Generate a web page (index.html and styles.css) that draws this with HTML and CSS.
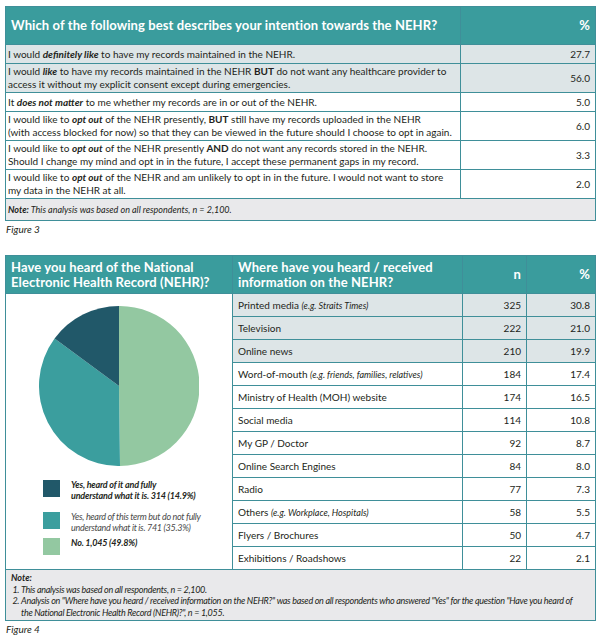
FILE: index.html
```html
<!DOCTYPE html>
<html>
<head>
<meta charset="utf-8">
<link rel="stylesheet" href="styles.css">
</head>
<body>
<div class="page">
  <table class="tbl fig3">
    <colgroup><col class="c-q"><col class="c-p"></colgroup>
    <thead>
      <tr><th class="hd">Which of the following best describes your intention towards the NEHR?</th><th class="hd num">%</th></tr>
    </thead>
    <tbody>
      <tr class="shade"><td>I would <b><i>definitely like</i></b> to have my records maintained in the NEHR.</td><td class="num">27.7</td></tr>
      <tr class="shade"><td>I would <b><i>like</i></b> to have my records maintained in the NEHR <b>BUT</b> do not want any healthcare provider to<br>access it without my explicit consent except during emergencies.</td><td class="num">56.0</td></tr>
      <tr><td>It <b><i>does not matter</i></b> to me whether my records are in or out of the NEHR.</td><td class="num">5.0</td></tr>
      <tr><td>I would like to <b><i>opt out</i></b> of the NEHR presently, <b>BUT</b> still have my records uploaded in the NEHR<br>(with access blocked for now) so that they can be viewed in the future should I choose to opt in again.</td><td class="num">6.0</td></tr>
      <tr><td>I would like to <b><i>opt out</i></b> of the NEHR presently <b>AND</b> do not want any records stored in the NEHR.<br>Should I change my mind and opt in in the future, I accept these permanent gaps in my record.</td><td class="num">3.3</td></tr>
      <tr><td>I would like to <b><i>opt out</i></b> of the NEHR and am unlikely to opt in in the future. I would not want to store<br>my data in the NEHR at all.</td><td class="num">2.0</td></tr>
      <tr class="note-row"><td colspan="2"><b>Note:</b> This analysis was based on all respondents, n = 2,100.</td></tr>
    </tbody>
  </table>
  <p class="caption">Figure 3</p>

  <table class="tbl fig4">
    <colgroup><col class="c-left"><col class="c-src"><col class="c-n"><col class="c-pc"></colgroup>
    <thead>
      <tr>
        <th class="hd hd2">Have you heard of the National<br>Electronic Health Record (NEHR)?</th>
        <th class="hd hd2 src-h">Where have you heard / received<br>information on the NEHR?</th>
        <th class="hd num">n</th>
        <th class="hd num">%</th>
      </tr>
    </thead>
    <tbody>
      <tr class="shade">
        <td class="left" rowspan="12">
          <div class="chart">
            <svg class="pie" width="160" height="160" viewBox="0 0 160 160">
              <path d="M80,80 L80,0 A80,80 0 0 1 81.0,160 Z" fill="#93c8a1"/>
              <path d="M80,80 L81.0,160 A80,80 0 0 1 15.58,32.57 Z" fill="#3b9e9e"/>
              <path d="M80,80 L15.58,32.57 A80,80 0 0 1 80,0 Z" fill="#215869"/>
            </svg>
            <ul class="legend">
              <li class="lg lg1"><span class="sw sw-dark"></span><span class="lt strong">Yes, heard of it and fully<br>understand what it is. 314 (14.9%)</span></li>
              <li class="lg lg2"><span class="sw sw-teal"></span><span class="lt light">Yes, heard of this term but do not fully<br>understand what it is. 741 (35.3%)</span></li>
              <li class="lg lg3"><span class="sw sw-green"></span><span class="lt strong">No. 1,045 (49.8%)</span></li>
            </ul>
          </div>
        </td>
        <td>Printed media <i class="eg">(e.g. Straits Times)</i></td><td class="num">325</td><td class="num">30.8</td>
      </tr>
      <tr class="shade"><td>Television</td><td class="num">222</td><td class="num">21.0</td></tr>
      <tr class="shade"><td>Online news</td><td class="num">210</td><td class="num">19.9</td></tr>
      <tr><td>Word-of-mouth <i class="eg">(e.g. friends, families, relatives)</i></td><td class="num">184</td><td class="num">17.4</td></tr>
      <tr><td>Ministry of Health (MOH) website</td><td class="num">174</td><td class="num">16.5</td></tr>
      <tr><td>Social media</td><td class="num">114</td><td class="num">10.8</td></tr>
      <tr><td>My GP / Doctor</td><td class="num">92</td><td class="num">8.7</td></tr>
      <tr><td>Online Search Engines</td><td class="num">84</td><td class="num">8.0</td></tr>
      <tr><td>Radio</td><td class="num">77</td><td class="num">7.3</td></tr>
      <tr><td>Others <i class="eg">(e.g. Workplace, Hospitals)</i></td><td class="num">58</td><td class="num">5.5</td></tr>
      <tr><td>Flyers / Brochures</td><td class="num">50</td><td class="num">4.7</td></tr>
      <tr><td>Exhibitions / Roadshows</td><td class="num">22</td><td class="num">2.1</td></tr>
      <tr class="note-row note4">
        <td colspan="4">
          <div class="note-title">Note:</div>
          <ol class="notes">
            <li>This analysis was based on all respondents, n = 2,100.</li>
            <li>Analysis on "Where have you heard / received information on the NEHR?" was based on all respondents who answered "Yes" for the question "Have you heard of<br>the National Electronic Health Record (NEHR)?", n = 1,055.</li>
          </ol>
        </td>
      </tr>
    </tbody>
  </table>
  <p class="caption">Figure 4</p>
</div>
</body>
</html>
```

FILE: styles.css
```css
html, body {
  margin: 0;
  padding: 0;
  background: #ffffff;
}
body {
  font-family: Lato, "Noto Sans", sans-serif;
  color: #231f20;
}
.page {
  padding: 6px 5px 0 5px;
  width: 590px;
}
.tbl {
  width: 590px;
  border-collapse: collapse;
  table-layout: fixed;
  border: 1.5px solid #2e7e88;
}
.tbl td, .tbl th {
  border: 1px solid #3f8f99;
  padding: 0 7px;
  font-size: 10px;
  line-height: 13px;
  vertical-align: middle;
  text-align: left;
}
.c-q { width: 455px; }
.c-p { width: 135px; }
.hd {
  background: #3a9c9d;
  color: #ffffff;
  font-weight: 700;
  font-size: 13px !important;
  line-height: 15px !important;
  height: 37px;
  padding: 0 5px !important;
  letter-spacing: 0.1px;
}
.num { text-align: right !important; padding-right: 5px !important; }
.fig3 td { height: 16px; padding-top: 1px; padding-bottom: 1px; padding-left: 2px; }
.shade td { background: #dde5e7; }
.shade td.left { background: #ffffff; }
.note-row td {
  background: #e9e9eb;
  font-style: italic;
  font-size: 9px;
}
.fig3 .note-row td { height: 19px; }
.caption {
  margin: 2px 0 0 1px;
  font-size: 10px;
  font-style: italic;
  height: 32px;
  line-height: 12px;
}
.c-left { width: 227px; }
.c-src { width: 230px; }
.c-n { width: 64px; }
.c-pc { width: 69px; }
.hd2 { padding-left: 5px !important; }
.fig4 tbody td { height: 22px; padding-left: 5px; }
.fig4 td.left {
  vertical-align: top;
  padding: 0;
  background: #ffffff;
}
.eg { font-size: 9px; }
.chart {
  display: flex;
  flex-direction: column;
  align-items: flex-start;
}
.pie {
  display: block;
  margin: 12px 0 0 33px;
}
.legend {
  list-style: none;
  margin: 14px 0 0 37px;
  padding: 0;
}
.lg {
  display: flex;
  align-items: flex-start;
  gap: 11px;
}
.lg2 { margin-top: 11px; }
.lg3 { margin-top: 5px; }
.sw {
  width: 17px;
  height: 17px;
  flex: none;
}
.sw-dark { background: #215869; }
.sw-teal { background: #3b9e9e; }
.sw-green { background: #93c8a1; }
.lt {
  font-size: 9px;
  line-height: 11px;
  font-style: italic;
  margin-top: -1px;
}
.lt.strong {
  font-weight: 700;
  color: #231f20;
  letter-spacing: -0.2px;
}
.lt.light {
  color: #4a4a4a;
  letter-spacing: -0.3px;
}
.fig4 .note4 td {
  height: auto;
  padding: 2px 5px 2px 5px;
  line-height: 11.5px;
}
.note-title { font-weight: 700; }
.notes {
  margin: 0;
  padding-left: 10px;
  letter-spacing: -0.28px;
}
```
